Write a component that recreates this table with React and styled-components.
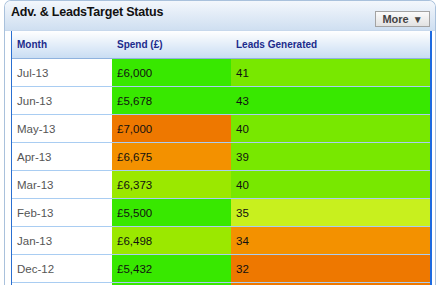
import React from 'react';
import styled, { createGlobalStyle } from 'styled-components';

const GlobalStyle = createGlobalStyle`
  body {
    margin: 0;
    background: #ffffff;
    font-family: "Liberation Sans", Arial, sans-serif;
  }
`;

const Panel = styled.div`
  margin-left: 4px;
  width: 432px;
  height: 285px;
  border: 1px solid #a9c1dc;
  border-bottom: none;
  border-radius: 7px 7px 0 0;
  overflow: hidden;
  box-sizing: border-box;
`;

const PanelHeader = styled.div`
  height: 30px;
  display: flex;
  align-items: flex-start;
  justify-content: space-between;
  padding: 4px 5px 0 6px;
  box-sizing: border-box;
  background: linear-gradient(#f3f7fc, #cfdff1);
  border-bottom: 1px solid #c7d8ec;
`;

const Title = styled.div`
  font-size: 12.5px;
  font-weight: bold;
  color: #111;
  letter-spacing: -0.2px;
`;

const MoreButton = styled.div`
  margin-top: 6px;
  width: 55px;
  height: 16px;
  box-sizing: border-box;
  border: 1px solid #a3a3a3;
  background: linear-gradient(#fbfbfb, #e2e2e2);
  font-size: 11px;
  font-weight: bold;
  color: #444;
  display: flex;
  align-items: center;
  justify-content: center;
  gap: 4px;
`;

const Arrow = styled.span`
  font-size: 10px;
`;

const Body = styled.div`
  padding: 0 4px 0 6px;
`;

const Table = styled.div`
  border-left: 1px solid #2a6fd0;
  border-right: 2px solid #1d6ae0;
  width: 421px;
  box-sizing: border-box;
`;

const Row = styled.div`
  display: grid;
  grid-template-columns: 100px 119px 1fr;
  height: 28px;
  border-bottom: 1px solid ${p => (p.head ? '#8fb2de' : '#a9cdf2')};
  box-sizing: border-box;
  background: ${p => (p.head ? 'linear-gradient(#ffffff, #c9ddf3)' : '#fff')};
`;

const Cell = styled.div`
  display: flex;
  align-items: center;
  padding-left: 5px;
  font-size: ${p => (p.head ? '10px' : '11.5px')};
  font-weight: ${p => (p.head ? 'bold' : 'normal')};
  color: ${p => (p.head ? '#1c2b8c' : p.muted ? '#555' : '#111')};
  background: ${p => p.bg || 'transparent'};
`;

const C = {
  green: '#38e800',
  lime: '#78e800',
  yg: '#9be800',
  yellow: '#c8f01e',
  orange: '#f39100',
  dark: '#ee7800',
};

const rows = [
  ['Jul-13', '£6,000', C.green, '41', C.lime],
  ['Jun-13', '£5,678', C.green, '43', C.green],
  ['May-13', '£7,000', C.dark, '40', C.lime],
  ['Apr-13', '£6,675', C.orange, '39', C.lime],
  ['Mar-13', '£6,373', C.yg, '40', C.lime],
  ['Feb-13', '£5,500', C.green, '35', C.yellow],
  ['Jan-13', '£6,498', C.yg, '34', C.orange],
  ['Dec-12', '£5,432', C.green, '32', C.dark],
  ['next', '', C.green, '', C.dark],
];

export default function App() {
  return (
    <>
      <GlobalStyle />
      <Panel>
        <PanelHeader>
          <Title>Adv. &amp; LeadsTarget Status</Title>
          <MoreButton>More <Arrow>▼</Arrow></MoreButton>
        </PanelHeader>
        <Body>
          <Table>
            <Row head>
              <Cell head>Month</Cell>
              <Cell head>Spend (£)</Cell>
              <Cell head>Leads Generated</Cell>
            </Row>
            {rows.map(r => (
              <Row key={r[0]}>
                <Cell muted>{r[0] === 'next' ? '' : r[0]}</Cell>
                <Cell bg={r[2]}>{r[1]}</Cell>
                <Cell bg={r[4]}>{r[3]}</Cell>
              </Row>
            ))}
          </Table>
        </Body>
      </Panel>
    </>
  );
}
